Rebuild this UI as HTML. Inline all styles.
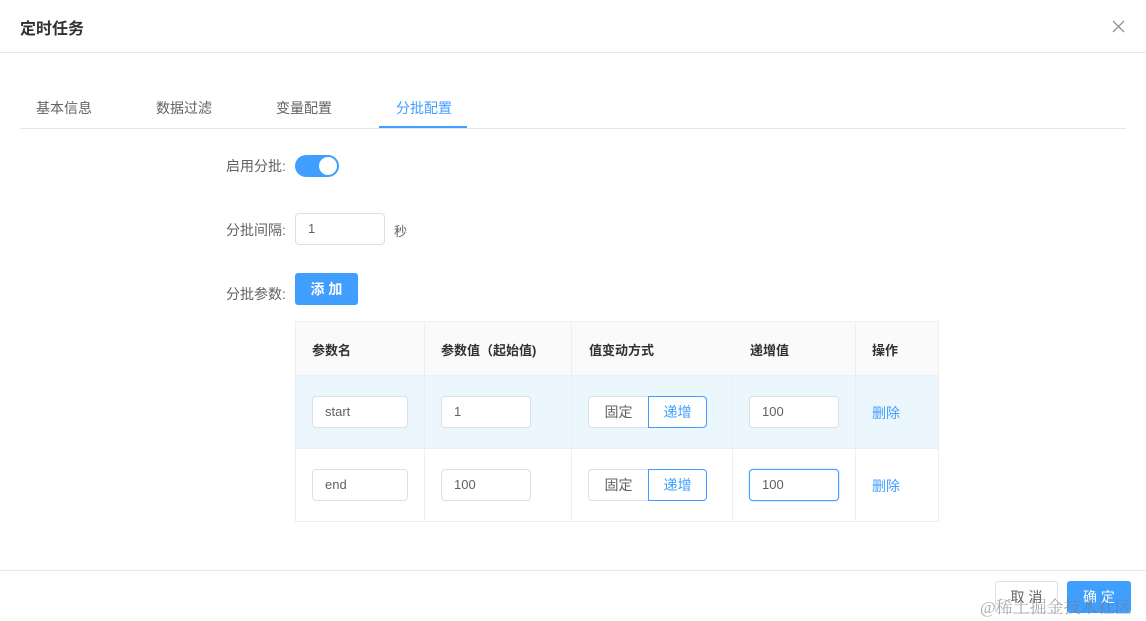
<!DOCTYPE html>
<html><head><meta charset="utf-8"><style>
*{box-sizing:border-box;margin:0;padding:0}
body{width:1146px;height:621px;background:#fff;font-family:"Liberation Sans","Noto Sans CJK SC",sans-serif;position:relative;overflow:hidden;color:#606266;font-size:14px}
.a{position:absolute}
.inp{position:absolute;border:1px solid #dcdfe6;border-radius:4px;background:#fff;font-size:13px;color:#606266;padding-left:12px;line-height:30px;height:32px}
.seg{position:absolute;height:32px;width:119px;display:flex;font-size:14px}
.seg div{line-height:30px;text-align:center}
.seg .l{width:60px;border:1px solid #dcdfe6;border-right:none;border-radius:4px 0 0 4px;color:#606266;background:#fff}
.seg .r{width:59px;border:1px solid #409eff;border-radius:0 4px 4px 0;color:#409eff;background:#fff}
.del{position:absolute;color:#409eff;font-size:14px}
.h{position:absolute;top:340px;color:#303133;font-weight:bold;font-size:13px}
</style></head><body>
<div class="a" style="left:20px;top:15px;font-size:16px;color:#303133;font-weight:bold">定时任务</div>
<svg class="a" style="left:1112px;top:20px" width="13" height="13" viewBox="0 0 13 13"><path d="M1 1L12 12M12 1L1 12" stroke="#909399" stroke-width="1.3"/></svg>
<div class="a" style="left:0;top:52px;width:1146px;height:1px;background:#e4e7ed"></div>
<div class="a" style="left:20px;top:128px;width:1106px;height:1px;background:#e4e7ed"></div>
<div class="a" style="left:36px;top:98px;color:#606266">基本信息</div>
<div class="a" style="left:156px;top:98px;color:#606266">数据过滤</div>
<div class="a" style="left:276px;top:98px;color:#606266">变量配置</div>
<div class="a" style="left:396px;top:98px;color:#409eff">分批配置</div>
<div class="a" style="left:379px;top:126px;width:88px;height:2px;background:#409eff"></div>
<div class="a" style="left:226px;top:156px">启用分批:</div>
<div class="a" style="left:295px;top:155px;width:44px;height:22px;border-radius:11px;background:#409eff"><div class="a" style="left:24px;top:2px;width:18px;height:18px;border-radius:50%;background:#fff"></div></div>
<div class="a" style="left:226px;top:220px">分批间隔:</div>
<div class="inp" style="left:295px;top:213px;width:90px">1</div>
<div class="a" style="left:394px;top:221px;font-size:13px">秒</div>
<div class="a" style="left:226px;top:284px">分批参数:</div>
<div class="a" style="left:295px;top:273px;width:63px;height:32px;background:#409eff;border-radius:3px;color:#fff;text-align:center;line-height:32px;font-size:14px;font-weight:bold">添 加</div>
<div class="a" style="left:295px;top:321px;width:644px;height:201px;border:1px solid #ebeef5"></div>
<div class="a" style="left:296px;top:322px;width:642px;height:53px;background:#fafafa"></div>
<div class="a" style="left:296px;top:375px;width:642px;height:73px;background:#ecf7fd"></div>
<div class="a" style="left:296px;top:375px;width:642px;height:1px;background:#ebeef5"></div>
<div class="a" style="left:296px;top:448px;width:642px;height:1px;background:#ebeef5"></div>
<div class="a" style="left:424px;top:322px;width:1px;height:199px;background:#ebeef5"></div>
<div class="a" style="left:571px;top:322px;width:1px;height:199px;background:#ebeef5"></div>
<div class="a" style="left:732px;top:376px;width:1px;height:145px;background:#ebeef5"></div>
<div class="a" style="left:855px;top:322px;width:1px;height:199px;background:#ebeef5"></div>
<div class="h" style="left:312px">参数名</div>
<div class="h" style="left:441px">参数值（起始值)</div>
<div class="h" style="left:589px">值变动方式</div>
<div class="h" style="left:750px">递增值</div>
<div class="h" style="left:872px">操作</div>
<div class="inp" style="left:312px;top:396px;width:96px">start</div>
<div class="inp" style="left:441px;top:396px;width:90px">1</div>
<div class="seg" style="left:588px;top:396px"><div class="l">固定</div><div class="r">递增</div></div>
<div class="inp" style="left:749px;top:396px;width:90px">100</div>
<div class="del" style="left:872px;top:403px">删除</div>
<div class="inp" style="left:312px;top:469px;width:96px">end</div>
<div class="inp" style="left:441px;top:469px;width:90px">100</div>
<div class="seg" style="left:588px;top:469px"><div class="l">固定</div><div class="r">递增</div></div>
<div class="inp" style="left:749px;top:469px;width:90px;border-color:#409eff;box-shadow:0 0 2px #9fcfff">100</div>
<div class="del" style="left:872px;top:476px">删除</div>
<div class="a" style="left:0;top:570px;width:1146px;height:1px;background:#e4e7ed"></div>
<div class="a" style="left:995px;top:581px;width:63px;height:32px;border:1px solid #dcdfe6;border-radius:3px;text-align:center;line-height:30px;color:#606266">取 消</div>
<div class="a" style="left:1067px;top:581px;width:64px;height:32px;background:#409eff;border-radius:3px;text-align:center;line-height:32px;color:#fff">确 定</div>
<div class="a" style="left:980px;top:593px;font-size:17px;color:rgba(120,120,120,.6);font-family:'Liberation Serif','Noto Serif CJK SC',serif">@稀土掘金技术社区</div>
</body></html>
